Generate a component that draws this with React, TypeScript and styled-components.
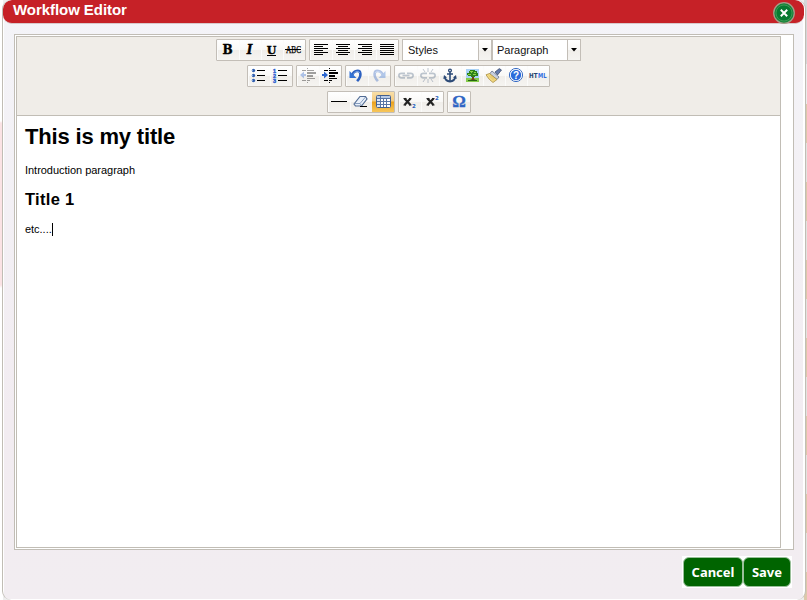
import React from 'react';
import styled, { createGlobalStyle, css } from 'styled-components';

const line = '#c1bdb5';

const GlobalStyle = createGlobalStyle`
  * { box-sizing: border-box; }
  body {
    margin: 0;
    overflow: hidden;
    background: #fff;
    font-family: "Liberation Sans", Arial, sans-serif;
  }
`;

const Page = styled.div`
  display: flex;
  width: 807px;
  height: 600px;
  background:
    linear-gradient(#fff 0 121px, #fbe3e5 123px 285px, #fff 288px) 0 0 / 3px 100% no-repeat,
    linear-gradient(#d6d6d8 0 64px, #ececec 64px 104px, transparent 104px) 100% 0 / 3px 100% no-repeat,
    repeating-linear-gradient(#dcc8aa 0 39px, #e3e3df 39px 78px) 100% 26px / 3px 100% no-repeat,
    #eee;
`;

const Dialog = styled.div`
  display: flex;
  flex-direction: column;
  width: 804px;
  height: 600px;
  margin-left: 2px;
  padding: 0 1px;
  overflow: hidden;
  border: 1px solid ${line};
  border-top: 0;
  border-bottom: 0;
  border-radius: 9px;
  background: linear-gradient(#f4f4f8, #f2ecf1 70%, #f2edf1) 1px 0 / 799px 599px no-repeat, #fff;
`;

const TitleBar = styled.header`
  display: flex;
  flex: none;
  justify-content: space-between;
  width: 801px;
  height: 24px;
  margin-left: -1px;
  padding: 0 9px 0 10px;
  border-bottom: 1px solid #d8c9cb;
  border-radius: 9px;
  background: #c62127;
`;

const TitleText = styled.h1`
  margin: 0;
  color: #fff;
  font-size: 15px;
  font-weight: bold;
  letter-spacing: -0.06px;
  line-height: 20px;
`;

const CloseButton = styled.button`
  width: 22px;
  height: 24px;
  padding: 1px 0 0;
  border: 0;
  background: none;
  svg { display: block; }
`;

const EditorFrame = styled.main`
  flex: none;
  width: 780px;
  height: 516px;
  margin: 10px 0 0 10px;
  padding: 1px;
  border: 1px solid ${line};
  background: #fff;
`;

const Editor = styled.section`
  display: flex;
  flex-direction: column;
  width: 765px;
  height: 512px;
  border: 1px solid ${line};
`;

const Toolbar = styled.div`
  display: flex;
  flex: none;
  flex-direction: column;
  align-items: center;
  gap: 4px;
  height: 79px;
  padding-top: 2px;
  border-bottom: 1px solid ${line};
  background: #f0ede8;
`;

const ToolRow = styled.div`
  display: flex;
  gap: 3px;
  height: 22px;
`;

const Group = styled.div`
  display: flex;
  height: 22px;
  border: 1px solid #c3beb7;
  border-radius: 1px;
`;

const Tool = styled.button<{ $active?: boolean; $dim?: boolean }>`
  display: flex;
  align-items: center;
  justify-content: center;
  width: 22px;
  height: 20px;
  padding: 0;
  border: 0;
  background: linear-gradient(#fff 0, #f9f8f6 50%, #f0eeea 50%, #f5f4f1);
  box-shadow: inset 1px 0 #fbfbfa;
  ${(p) => p.$active && css`
    box-shadow: none;
    background: linear-gradient(#f9dfa8 0, #f4cb80 45%, #eba11c 50%, #f7c75c);
  `}
  svg { display: block; opacity: ${(p) => (p.$dim ? 0.36 : 1)}; }
`;

const Selects = styled.div`
  display: flex;
`;

const Select = styled.div<{ $width: number; $inset?: number }>`
  display: flex;
  width: ${(p) => p.$width}px;
  height: 22px;
  padding-left: ${(p) => p.$inset ?? 4}px;
  border: 1px solid #c3beb7;
  background: #fff;
`;

const SelectLabel = styled.span`
  flex: 1;
  color: #111;
  font-size: 11px;
  line-height: 20px;
`;

const SelectArrow = styled.span`
  display: flex;
  align-items: center;
  justify-content: center;
  width: 13px;
  padding-right: 1px;
  border-left: 1px solid #c3beb7;
  background: linear-gradient(#fff 0, #f9f8f6 50%, #f0eeea 50%, #f5f4f1);
`;

const Document = styled.article`
  flex: 1;
  padding: 8px;
  background: #fff;
  color: #000;
`;

const DocTitle = styled.h1`
  margin: 0;
  font-size: 22px;
  letter-spacing: -0.17px;
  line-height: 26px;
`;

const DocHeading = styled.h2`
  margin: 12px 0 0;
  font-size: 16.5px;
  letter-spacing: 0.3px;
  line-height: 20px;
`;

const Paragraph = styled.p`
  display: flex;
  align-items: center;
  margin: 14px 0 0;
  font-size: 11px;
  letter-spacing: -0.03px;
  line-height: 13px;
`;

const Caret = styled.span`
  width: 1px;
  height: 13px;
  background: #000;
`;

const Footer = styled.footer`
  display: flex;
  align-self: flex-end;
  margin: 6px 12px 0 0;
  padding: 1px;
  background: #fff;
`;

const ActionButton = styled.button<{ $width: number }>`
  width: ${(p) => p.$width}px;
  height: 30px;
  padding: 0;
  border: 1px solid #9abf9a;
  border-radius: 6px;
  background: #006400;
  color: #fff;
  font: bold 13px/26px "Noto Sans", sans-serif;
`;

const Svg = ({ children }: { children: React.ReactNode }) => (
  <svg width="20" height="20" viewBox="0 0 20 20">{children}</svg>
);

const Glyph = ({ text, size = 11, italic = false, underline = false }: {
  text: string; size?: number; italic?: boolean; underline?: boolean;
}) => (
  <Svg>
    <text x="9.5" y="13.5" textAnchor="middle" fontFamily='"DejaVu Serif", serif' fontSize={size} fontWeight="bold"
      fontStyle={italic ? 'italic' : 'normal'} fill="#000" stroke="#000" strokeWidth=".4">{text}</text>
    {underline && <path d="M5 15.5h9" stroke="#000" />}
  </Svg>
);

const Lines = ({ rows }: { rows: [number, number][] }) => (
  <Svg>
    {rows.map(([x, w], i) => <rect key={i} x={x} y={4 + i * 2} width={w} height="1" fill="#000" />)}
  </Svg>
);

const alignments: [number, number][][] = [
  [[3, 14], [3, 9], [3, 14], [3, 9], [3, 14], [3, 9]],
  [[3, 14], [5, 10], [3, 14], [5, 10], [3, 14], [5, 10]],
  [[3, 14], [7, 10], [3, 14], [7, 10], [3, 14], [7, 10]],
  [[3, 14], [3, 14], [3, 14], [3, 14], [3, 14], [3, 14]],
];

const Strike = () => (
  <Svg>
    <text x="2" y="13" textLength="15" lengthAdjust="spacingAndGlyphs" fontFamily="Liberation Serif, serif" fontSize="10" fill="#000" stroke="#000" strokeWidth=".25">ABC</text>
    <path d="M1 9.5h16" stroke="#000" />
  </Svg>
);

const BulletList = () => (
  <Svg>
    {[5, 10, 15].map((y) => (
      <g key={y}>
        <circle cx="4.500" cy={y - 0.5} r="1.700" fill="#315fb0" />
        <rect x="3" y={y - 1} width="1" height="1" fill="#83a9e0" />
        <rect x="8" y={y - 1} width="8" height="1" fill="#000" />
      </g>
    ))}
  </Svg>
);

const NumberList = () => (
  <Svg>
    {[1, 2, 3].map((n) => (
      <g key={n}>
        <text x="2" y={n * 5 + 1.5} fontFamily="Liberation Sans, sans-serif" fontSize="5.500" fontWeight="bold" fill="#2b60cf" stroke="#2b60cf" strokeWidth=".4">{n}</text>
        <rect x="7" y={n * 5 - 1} width="9" height="1" fill="#000" />
      </g>
    ))}
  </Svg>
);

const Indent = ({ left = false }: { left?: boolean }) => (
  <Svg>
    <path d="M9 2h1v1H9zM4 4h4v1H4zM9 4h7v1H9zM9 6h9v2H9zM9 9h6v2H9zM9 12h8v1H9zM4 14h4v1H4zM9 14h3v1H9zM9 16h1v1H9z" fill="#000" />
    <path d={left ? 'M6 5.500L2 9l4 3.500v-2.500h2V8H6z' : 'M4 5.500L8 9l-4 3.500v-2.500H2V8h2z'} fill="#2b65ce" />
  </Svg>
);

const Undo = ({ redo = false }: { redo?: boolean }) => (
  <Svg>
    <g transform={redo ? 'translate(20 0) scale(-1 1)' : 'translate(-1 0)'} fill="none">
      <path d="M6 9C8 4.500 13.500 3.500 14.300 7.200c.6 2.600-.5 5-3.200 8" stroke="#2c60c0" strokeWidth="2.600" />
      <path d="M7.500 8C9.500 5 12.700 4.600 13.700 7" stroke="#8eb5ef" strokeWidth=".8" />
      <path d="M3.500 5v7h7z" fill="#3472d4" />
    </g>
  </Svg>
);

const Link = ({ broken = false }: { broken?: boolean }) => (
  <Svg>
    <g fill="none" stroke="#526986" strokeWidth="1.700">
      <path d="M9 7.300H5.500C2 7.300 2 11.800 5.500 11.800H9M11 7.300h3.500c3.500 0 3.500 4.500 0 4.500H11" />
      {broken ? <path d="M10 2v4M5 3l2 3M15 3l-2 3M10 13v4M5 16l2-3M15 16l-2-3" strokeWidth="1" /> : <path d="M6.500 9.500h7" />}
    </g>
  </Svg>
);

const Anchor = () => (
  <Svg>
    <g fill="none" stroke="#2c4a77">
      <circle cx="10" cy="4.500" r="1.400" strokeWidth="1.300" />
      <path d="M10 6V15.500M7 8h6" strokeWidth="1.600" />
      <path d="M4.700 11c.5 3 2.500 4.200 5.300 4.500 2.800-.3 4.800-1.500 5.300-4.500" strokeWidth="1.800" />
    </g>
    <path d="M4 9L3.300 13 7 11.500zM16 9l.7 4L13 11.500z" fill="#2c4a77" />
  </Svg>
);

const Picture = () => (
  <Svg>
    <rect x="4" y="3" width="13" height="9" fill="#a9d2f6" />
    <rect x="4" y="12" width="13" height="4" fill="#86cb4b" />
    <path d="M10 9h2v4l2 1H8l2-1z" fill="#774019" />
    <path d="M7 5h1V4h5v1h2v2h1v3h-3v1H9v-1H6V9H5V7h2z" fill="#2e8118" />
    <path d="M8 5h3v1H8zM12 6h2v1h-2zM6 8h3v1H6zM11 8h3v1h-3zM9 6h1v1H9z" fill="#8bd243" />
    <path d="M6 14h9v1H6z" fill="#276713" />
  </Svg>
);

const Brush = () => (
  <Svg>
    <path d="M11 6l4.300-3.400L17.500 4 13.500 9z" fill="#657bad" stroke="#344566" strokeWidth=".7" />
    <path d="M8 5l7 6-2 2.500-7.500-5.500z" fill="#c8d0df" stroke="#64718a" strokeWidth=".8" />
    <path d="M5.500 7.500l7.500 6L9 16.500Q5 14 2 8.800z" fill="#f4dc85" stroke="#aa8d3f" strokeWidth=".8" />
    <path d="M5 9.500l5 5M7 9.500l4 4" stroke="#d1ab48" strokeWidth=".6" />
  </Svg>
);

const Help = () => (
  <Svg>
    <circle cx="10" cy="9" r="6.600" fill="#fff" stroke="#3a6dc4" />
    <circle cx="10" cy="9" r="5.200" fill="#2b6cdb" />
    <text x="10" y="12.700" textAnchor="middle" fontFamily="Liberation Sans, sans-serif" fontWeight="bold" fontSize="10" fill="#fff">?</text>
  </Svg>
);

const Html = () => (
  <Svg>
    <text x="1" y="12" fontFamily="DejaVu Sans, sans-serif" fontSize="7" fontWeight="bold" textLength="8.500" lengthAdjust="spacingAndGlyphs" fill="#27436c">HT</text>
    <text x="10" y="12" fontFamily="DejaVu Sans, sans-serif" fontSize="7" fontWeight="bold" textLength="8.500" lengthAdjust="spacingAndGlyphs" fill="#2f6be0">ML</text>
  </Svg>
);

const Eraser = () => (
  <Svg>
    <path d="M3 12l6-7.500h5.500L16 7l-5.500 7H4.500z" fill="#e9f0fa" stroke="#526c94" strokeWidth="1.200" />
    <path d="M3.500 11.500h5.500l1.500 2M9 11.500l5.500-6.500" fill="none" stroke="#6d88af" strokeWidth=".8" />
    <path d="M9 14.500h7" stroke="#000" />
  </Svg>
);

const Table = () => (
  <Svg>
    <rect x="3.500" y="3.500" width="14" height="12" rx="1" fill="#fff" stroke="#43608f" />
    <rect x="4" y="4" width="13" height="2" fill="#b9cbe6" />
    <rect x="4" y="6" width="3" height="9" fill="#dbe6f5" />
    <path d="M7.500 4v11M10.500 6v9M13.500 6v9M4 6.500h13M4 9.500h13M4 12.500h13" stroke="#5876a6" />
  </Svg>
);

const Script = ({ sup = false }: { sup?: boolean }) => (
  <Svg>
    <g transform={sup ? 'translate(1 0)' : undefined}>
      <path d="M4.500 6.500l6 6.500M10.500 6.500l-6 6.500" stroke="#222" strokeWidth="2.200" />
      <path d="M3.500 6.500h3M9 6.500h2.500M3.500 13h2.500M9 13h2.500" stroke="#222" />
      <text x="12" y={sup ? 7.5 : 15.5} fontFamily="DejaVu Sans, sans-serif" fontWeight="bold" fontSize="5.500" fill="#2860bd">2</text>
    </g>
  </Svg>
);

const Omega = () => (
  <Svg>
    <text x="10" y="15" textAnchor="middle" fontFamily='"Liberation Serif", serif' fontSize="17" fontWeight="bold" fill="#2f65c4" stroke="#2f65c4" strokeWidth=".3">Ω</text>
  </Svg>
);

const Arrow = () => <svg width="6" height="4" viewBox="0 0 6 4"><path d="M0 0h6L3 3.500z" fill="#000" /></svg>;

export default function App() {
  return (
    <>
      <GlobalStyle />
      <Page>
        <Dialog>
          <TitleBar>
            <TitleText>Workflow Editor</TitleText>
            <CloseButton aria-label="Close">
              <svg width="22" height="22" viewBox="0 0 22 22">
                <circle cx="11" cy="11" r="10.300" fill="#16853a" stroke="#a59a87" strokeWidth="1.300" />
                <circle cx="11" cy="11" r="8" fill="#087a31" stroke="#3b9954" strokeWidth="1" />
                <path d="M7.800 7.800l6.400 6.400M14.200 7.800l-6.400 6.400" stroke="#fff" strokeWidth="2" />
              </svg>
            </CloseButton>
          </TitleBar>
          <EditorFrame>
            <Editor>
              <Toolbar>
                <ToolRow>
                  <Group>
                    <Tool><Glyph text="B" size={12} /></Tool>
                    <Tool><Glyph text="I" size={12} italic /></Tool>
                    <Tool><Glyph text="U" size={11} underline /></Tool>
                    <Tool><Strike /></Tool>
                  </Group>
                  <Group>
                    {alignments.map((rows, i) => <Tool key={i}><Lines rows={rows} /></Tool>)}
                  </Group>
                  <Selects>
                    <Select $width={90} $inset={5}><SelectLabel>Styles</SelectLabel><SelectArrow><Arrow /></SelectArrow></Select>
                    <Select $width={89}><SelectLabel>Paragraph</SelectLabel><SelectArrow><Arrow /></SelectArrow></Select>
                  </Selects>
                </ToolRow>
                <ToolRow>
                  <Group><Tool><BulletList /></Tool><Tool><NumberList /></Tool></Group>
                  <Group><Tool $dim><Indent left /></Tool><Tool><Indent /></Tool></Group>
                  <Group><Tool><Undo /></Tool><Tool $dim><Undo redo /></Tool></Group>
                  <Group>
                    <Tool $dim><Link /></Tool>
                    <Tool $dim><Link broken /></Tool>
                    <Tool><Anchor /></Tool>
                    <Tool><Picture /></Tool>
                    <Tool><Brush /></Tool>
                    <Tool><Help /></Tool>
                    <Tool><Html /></Tool>
                  </Group>
                </ToolRow>
                <ToolRow>
                  <Group>
                    <Tool><Svg><path d="M2 9.500h16" stroke="#000" /></Svg></Tool>
                    <Tool><Eraser /></Tool>
                    <Tool $active><Table /></Tool>
                  </Group>
                  <Group><Tool><Script /></Tool><Tool><Script sup /></Tool></Group>
                  <Group><Tool><Omega /></Tool></Group>
                </ToolRow>
              </Toolbar>
              <Document>
                <DocTitle>This is my title</DocTitle>
                <Paragraph>Introduction paragraph</Paragraph>
                <DocHeading>Title 1</DocHeading>
                <Paragraph>etc....<Caret /></Paragraph>
              </Document>
            </Editor>
          </EditorFrame>
          <Footer>
            <ActionButton $width={60}>Cancel</ActionButton>
            <ActionButton $width={48}>Save</ActionButton>
          </Footer>
        </Dialog>
      </Page>
    </>
  );
}
